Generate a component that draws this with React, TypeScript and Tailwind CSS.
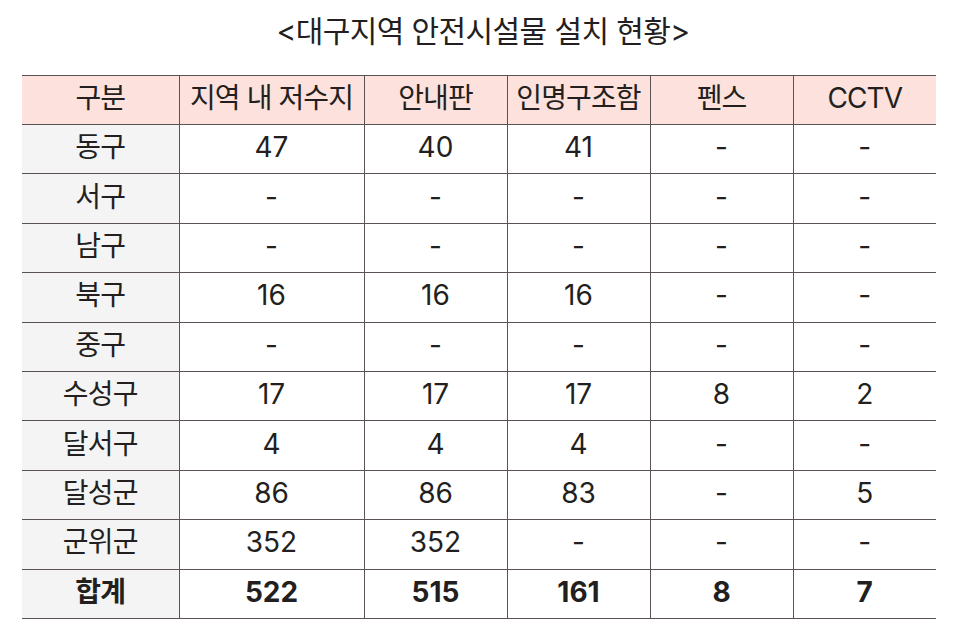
import React from "react"

const columns = ["구분", "지역 내 저수지", "안내판", "인명구조함", "펜스", "CCTV"]

const rows = [
  ["동구", "47", "40", "41", "-", "-"],
  ["서구", "-", "-", "-", "-", "-"],
  ["남구", "-", "-", "-", "-", "-"],
  ["북구", "16", "16", "16", "-", "-"],
  ["중구", "-", "-", "-", "-", "-"],
  ["수성구", "17", "17", "17", "8", "2"],
  ["달서구", "4", "4", "4", "-", "-"],
  ["달성군", "86", "86", "83", "-", "5"],
  ["군위군", "352", "352", "-", "-", "-"],
]

const total = ["합계", "522", "515", "161", "8", "7"]

const widths = ["w-[157px]", "w-[185px]", "w-[143px]", "w-[143px]", "w-[143px]", "w-[143px]"]

export default function App() {
  return (
    <div
      className="w-[966px] h-[639px] bg-white text-[#231f20]"
      style={{ fontFamily: 'Inter, "Noto Sans CJK KR", "Noto Sans", sans-serif' }}
    >
      <h1 className="pt-[9px] h-[75px] text-center text-[30px] font-normal tracking-[-0.6px]">
        &lt;대구지역 안전시설물 설치 현황&gt;
      </h1>

      <table className="ml-[22px] border-collapse table-fixed w-[914px]">
        <thead>
          <tr className="h-[49px] bg-[#fde1dc]">
            {columns.map((c, i) => (
              <th
                key={c}
                className={`${widths[i]} pb-[4px] border-y-[1.5px] border-[#5b5353] font-normal text-[28px] tracking-[-0.9px] leading-none ${
                  i > 0 ? "border-l border-l-[#5b5353]" : ""
                }`}
              >
                {c}
              </th>
            ))}
          </tr>
        </thead>
        <tbody>
          {rows.map((r) => (
            <tr key={r[0]} className="h-[49.4px]">
              {r.map((v, i) => (
                <td
                  key={i}
                  className={`pb-[4px] text-center text-[28px] leading-none border-b border-[#5b5353] ${
                    i === 0 ? "bg-[#f4f4f4] tracking-[-0.8px]" : "border-l border-l-[#5b5353]"
                  }`}
                >
                  {v}
                </td>
              ))}
            </tr>
          ))}
          <tr className="h-[49.4px]">
            {total.map((v, i) => (
              <td
                key={i}
                className={`pb-[4px] text-center text-[28px] font-bold leading-none border-b-[1.5px] border-[#5b5353] ${
                  i === 0 ? "bg-[#f4f4f4] tracking-[-0.8px]" : "border-l border-l-[#5b5353]"
                }`}
              >
                {v}
              </td>
            ))}
          </tr>
        </tbody>
      </table>
    </div>
  )
}
